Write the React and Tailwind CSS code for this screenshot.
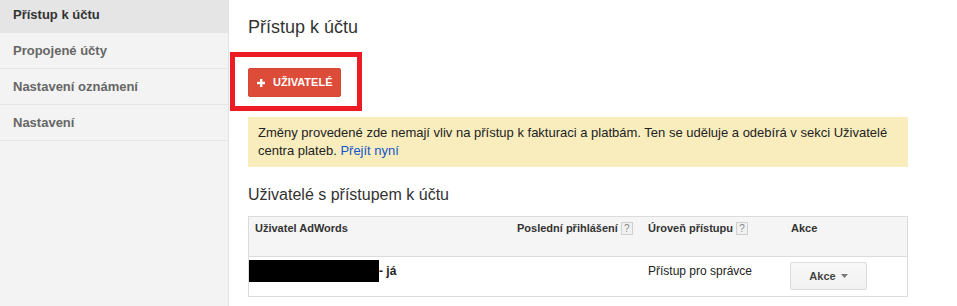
import React from "react";

function Help() {
  return (
    <span className="ml-[3px] inline-flex h-[13px] w-[12px] items-center justify-center border border-[#cfcfcf] bg-[#f1f1f1] text-[10px] font-normal leading-none text-[#888]">
      ?
    </span>
  );
}

export default function App() {
  const font = { fontFamily: '"Liberation Sans", Arial, sans-serif' };
  return (
    <div className="flex h-[306px] w-[957px] overflow-hidden bg-white" style={font}>
      {/* Sidebar */}
      <div className="flex w-[229px] shrink-0 flex-col border-r border-[#e3e3e3] bg-[#f3f3f3]">
        <div className="flex h-[33px] items-center border-b border-[#e6e6e6] bg-[#e5e5e5] pb-[2px] pl-[13px] text-[13px] font-bold text-[#333]">
          Přístup k účtu
        </div>
        {["Propojené účty", "Nastavení oznámení", "Nastavení"].map((t) => (
          <div
            key={t}
            className="flex h-[36px] items-center border-b border-[#e6e6e6] pl-[13px] text-[13px] font-bold text-[#666]"
          >
            {t}
          </div>
        ))}
      </div>

      {/* Main */}
      <div className="flex flex-1 flex-col pl-[19px]">
        <h1 className="mt-[15px] h-[24px] text-[18px] font-normal leading-[24px] text-[#333]">
          Přístup k účtu
        </h1>

        <div className="relative mt-[29px] self-start">
          <button className="flex h-[29px] w-[93px] items-center rounded-[2px] border border-[#d14836] bg-[#dd4b39] pl-[8px] text-[11px] font-bold text-white">
            <svg width="8" height="8" viewBox="0 0 8 8" className="mr-[8px]">
              <rect x="3" y="0" width="2.4" height="8" fill="white" />
              <rect x="0" y="2.8" width="8" height="2.4" fill="white" />
            </svg>
            UŽIVATELÉ
          </button>
          <div className="pointer-events-none absolute left-[-18px] top-[-16px] h-[59px] w-[132px] border-[5px] border-[#ed1c24]" />
        </div>

        <div className="mt-[20px] w-[660px] bg-[#f9edbe] px-[10px] py-[7px] text-[13px] leading-[18px] text-[#222]">
          <p>
            Změny provedené zde nemají vliv na přístup k fakturaci a platbám. Ten se uděluje a odebírá v sekci Uživatelé
            centra plateb. <a className="text-[#15c]">Přejít nyní</a>
          </p>
        </div>

        <h2 className="mt-[18px] h-[20px] text-[16px] font-normal leading-[20px] text-[#333]">
          Uživatelé s přístupem k účtu
        </h2>

        <div className="mt-[11px] w-[660px] border border-[#dcdcdc]">
          <div className="grid h-[40px] grid-cols-[262px_131px_143px_1fr] border-b border-[#dcdcdc] bg-[#f5f5f5] text-[11px] font-bold text-[#333]">
            <div className="flex h-[22px] items-center pl-[6px] pt-[1px]">Uživatel AdWords</div>
            <div className="flex h-[22px] items-center pl-[6px] pt-[1px]">
              Poslední přihlášení
              <Help />
            </div>
            <div className="flex h-[22px] items-center pl-[6px] pt-[1px]">
              Úroveň přístupu
              <Help />
            </div>
            <div className="flex h-[22px] items-center pl-[6px] pt-[1px]">Akce</div>
          </div>
          <div className="grid h-[39px] grid-cols-[262px_131px_143px_1fr] text-[12px] text-[#222]">
            <div className="flex items-start pt-[3px]">
              <div className="h-[22px] w-[130px] bg-black" />
              <span className="mt-[2px] font-bold text-[#222]">- já</span>
            </div>
            <div />
            <div className="pl-[6px] pt-[5px]">Přístup pro správce</div>
            <div className="pl-[5px] pt-[5px]">
              <button className="flex h-[28px] w-[77px] items-center justify-center rounded-[2px] border border-[#dcdcdc] bg-gradient-to-b from-[#f8f8f8] to-[#f1f1f1] text-[11px] font-bold text-[#444]">
                Akce
                <svg width="7" height="4" viewBox="0 0 7 4" className="ml-[5px]">
                  <polygon points="0,0 7,0 3.5,4" fill="#777" />
                </svg>
              </button>
            </div>
          </div>
        </div>
      </div>
    </div>
  );
}
